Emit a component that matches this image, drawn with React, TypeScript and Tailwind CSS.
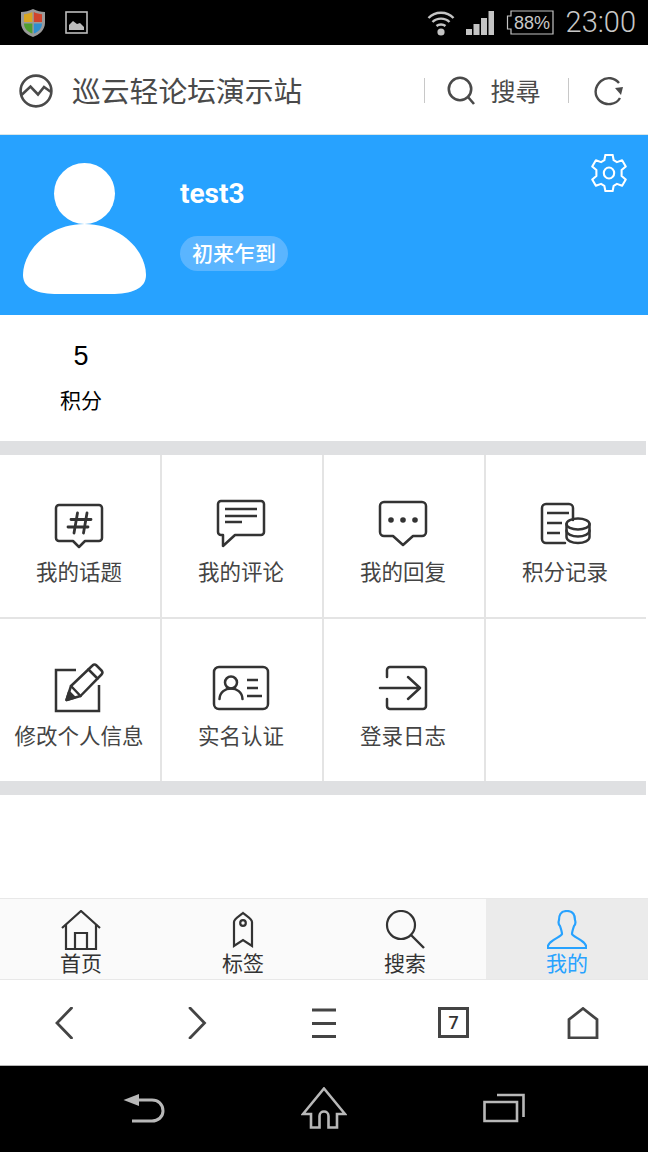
const cjk = "font-['Noto_Sans_CJK_SC','Noto_Sans',sans-serif]";

function StatusBar() {
  return (
    <div className="h-[45px] bg-black flex items-center pl-[20px] pr-[12px] shrink-0">
      <svg width="26" height="30" viewBox="0 0 26 30">
        <path d="M13 1 C17 3 21 4 25 4 V15 C25 22 19 27 13 29 C7 27 1 22 1 15 V4 C5 4 9 3 13 1Z" fill="#9a9a9a" />
        <path d="M12.4 4 C9.5 5.4 6.5 6 4 6.2 V14 H12.4Z" fill="#d9a520" />
        <path d="M13.8 4 C16.5 5.4 19.5 6 22 6.2 V14 H13.8Z" fill="#d0442c" />
        <path d="M4 15.4 H12.4 V25.5 C8 24 4 20.5 4 15.4Z" fill="#4f9e2f" />
        <path d="M22 15.4 H13.8 V25.5 C18 24 22 20.5 22 15.4Z" fill="#2f8fd0" />
      </svg>
      <svg className="ml-[19px]" width="23" height="23" viewBox="0 0 23 23">
        <rect x="1" y="1" width="21" height="21" fill="none" stroke="#bdbdbd" strokeWidth="1.6" />
        <path d="M4 19 V14 L8 10 L12 13 L15 12 L19 16 V19Z" fill="#bdbdbd" />
      </svg>
      <svg className="ml-auto" width="28" height="28" viewBox="0 0 28 28" fill="none" stroke="#c4c4c4" strokeWidth="2.4">
        <path d="M1.5 9 C8 2 20 2 26.5 9" />
        <path d="M5.5 13 C10 8.5 18 8.5 22.5 13" />
        <path d="M9.5 17 C12 15 16 15 18.5 17" />
        <circle cx="14" cy="23" r="3.6" fill="#c4c4c4" stroke="none" />
      </svg>
      <svg className="ml-[11px]" width="28" height="24" viewBox="0 0 28 24" fill="#c4c4c4">
        <rect x="0" y="18" width="6" height="6" />
        <rect x="7.5" y="13" width="6" height="11" />
        <rect x="15" y="7" width="6" height="17" />
        <rect x="22.5" y="0" width="5.5" height="24" />
      </svg>
      <div className="ml-[12px] relative w-[48px] h-[25px] flex items-center justify-center pl-[5px]">
        <svg className="absolute inset-0" width="48" height="25" viewBox="0 0 48 25" fill="none" stroke="#c4c4c4" strokeWidth="1.2">
          <path d="M5 1 H47 V24 H5 V19 H1.5 V6 H5Z" />
        </svg>
        <span className="font-['Liberation_Sans',sans-serif] text-[18px] leading-none text-[#c8c8c8]">88%</span>
      </div>
      <span className="ml-[12px] font-['Roboto',sans-serif] font-light text-[29px] leading-none text-[#c8c8c8]">23:00</span>
    </div>
  );
}

function Header() {
  return (
    <div className={`h-[90px] bg-white border-b border-[#d9e6e8] flex items-center pl-[19px] pt-[2px] shrink-0 ${cjk}`}>
      <svg width="34" height="34" viewBox="0 0 34 34" fill="none" stroke="#4a4a4a" strokeWidth="2.6">
        <circle cx="17" cy="17" r="15.4" />
        <path d="M2.5 21 L11.5 12.5 L19 20.5 L25 13 L32 18" />
      </svg>
      <span className="ml-[19px] text-[28.8px] leading-none text-[#4a4a4a]">巡云轻论坛演示站</span>
      <div className="ml-[122px] w-px h-[25px] bg-[#c8c8c8]" />
      <svg className="ml-[22px]" width="29" height="29" viewBox="0 0 29 29" fill="none" stroke="#4a4a4a" strokeWidth="2.6">
        <circle cx="13" cy="13" r="11.2" />
        <path d="M21 21 L27 28" />
      </svg>
      <span className="ml-[14px] text-[25px] leading-none text-[#4a4a4a]">搜尋</span>
      <div className="ml-[28px] w-px h-[25px] bg-[#c8c8c8]" />
      <svg className="ml-[25px]" width="30" height="30" viewBox="0 0 30 30" fill="none" stroke="#4a4a4a" strokeWidth="2.4">
        <path d="M25 7 C21 2 13 0 7 5 C0 11 0 20 6 25 C12 30 22 29 26 22" />
        <path d="M21 12 L29 11 L27 19Z" fill="#4a4a4a" stroke="none" />
      </svg>
    </div>
  );
}

function Profile() {
  return (
    <div className="h-[180px] bg-[#27a2ff] flex pl-[23px] pr-[20px] shrink-0">
      <svg className="mt-[28px]" width="123" height="132" viewBox="0 0 123 132" fill="#fff">
        <ellipse cx="61.5" cy="30.5" rx="30.5" ry="30.5" />
        <path d="M61.5 61 C98 61 123 88 123 112 C123 126 108 131 88 131 H35 C15 131 0 126 0 112 C0 88 25 61 61.5 61Z" />
      </svg>
      <div className="ml-[34px] flex flex-col items-start">
        <div className="mt-[41px] font-['Roboto',sans-serif] font-bold text-[28px] leading-[36px] text-white">test3</div>
        <div className={`mt-[24px] h-[35px] w-[108px] rounded-full bg-[#5ab5ff] flex items-center justify-center pb-[2px] text-white text-[21px] font-medium leading-none ${cjk}`}>初来乍到</div>
      </div>
      <svg className="ml-auto mt-[19px]" width="38" height="38" viewBox="1.5 1 21 22" fill="none" stroke="#fff" strokeWidth="1.2" strokeLinejoin="round">
        <path d="M9.9 1.5 H14.1 L14.7 4.6 L16.6 5.7 L19.6 4.6 L21.7 8.2 L19.3 10.3 V13.7 L21.7 15.8 L19.6 19.4 L16.6 18.3 L14.7 19.4 L14.1 22.5 H9.9 L9.3 19.4 L7.4 18.3 L4.4 19.4 L2.3 15.8 L4.7 13.7 V10.3 L2.3 8.2 L4.4 4.6 L7.4 5.7 L9.3 4.6Z" />
        <ellipse cx="12" cy="12" rx="3" ry="3.2" />
      </svg>
    </div>
  );
}

function Stat() {
  return (
    <div className={`h-[126px] bg-white shrink-0 w-[162px] flex flex-col items-center ${cjk}`}>
      <div className="mt-[21px] font-['Liberation_Sans',sans-serif] text-[27px] leading-[40px] text-black">5</div>
      <div className="mt-[3px] text-[21px] leading-[40px] text-black">积分</div>
    </div>
  );
}

const stroke = { fill: "none", stroke: "#333", strokeWidth: 2.5, strokeLinejoin: "round" as const, strokeLinecap: "round" as const };

const menuIcons = {
  topic: (
    <g {...stroke}>
      <path d="M9 6 H49 a3 3 0 0 1 3 3 V39 a3 3 0 0 1 -3 3 H35 L29 48 L23 42 H9 a3 3 0 0 1 -3 -3 V9 a3 3 0 0 1 3 -3Z" />
      <path d="M21 20.5 H41 M18 28 H38 M27.5 14 L24 34 M37 14 L33.5 34" strokeWidth="2.8" />
    </g>
  ),
  comment: (
    <g {...stroke}>
      <path d="M9 2 H49 a3 3 0 0 1 3 3 V33 a3 3 0 0 1 -3 3 H23 L11 47 V36 H9 a3 3 0 0 1 -3 -3 V5 a3 3 0 0 1 3 -3Z" />
      <path d="M13 10 H45 M13 17 H45 M13 23 H30" strokeLinecap="butt" />
    </g>
  ),
  reply: (
    <g {...stroke}>
      <path d="M10 3 H48 a4 4 0 0 1 4 4 V33 a4 4 0 0 1 -4 4 H39 L29 46 L19 37 H10 a4 4 0 0 1 -4 -4 V7 a4 4 0 0 1 4 -4Z" />
      <circle cx="17" cy="21" r="2.8" fill="#333" stroke="none" />
      <circle cx="29" cy="21" r="2.8" fill="#333" stroke="none" />
      <circle cx="41" cy="21" r="2.8" fill="#333" stroke="none" />
    </g>
  ),
  record: (
    <g {...stroke}>
      <path d="M37 21 V9 a4 4 0 0 0 -4 -4 H10 a4 4 0 0 0 -4 4 V40 a4 4 0 0 0 4 4 H29" />
      <path d="M11 14 H33 M11 24 H26 M11 34 H24" strokeLinecap="butt" />
      <ellipse cx="42" cy="25" rx="11.5" ry="5.5" />
      <path d="M30.5 25 V38 C30.5 41.5 36 44 42 44 C48 44 53.5 41.5 53.5 38 V25" />
      <path d="M30.5 31.5 C30.5 35 36 37.5 42 37.5 C48 37.5 53.5 35 53.5 31.5" />
    </g>
  ),
  edit: (
    <g {...stroke}>
      <path d="M26 7 H6 V48 H49 V22" strokeLinecap="butt" strokeLinejoin="miter" />
      <path d="M16.5 37 L21 23 L42.5 2.5 Q44.5 0.5 46.5 2.5 L51.5 7.5 Q53.5 9.5 51.5 11.5 L30.5 33Z" />
      <path d="M38.5 6.5 L47.5 15.5 M21 23 L30.5 33" />
      <path d="M16.5 37 L19 29 L24.5 34.5Z" fill="#333" />
    </g>
  ),
  card: (
    <g {...stroke}>
      <rect x="2" y="4" width="54" height="42" rx="5" />
      <circle cx="19" cy="19.5" r="6" />
      <path d="M7.5 36 C8 22 30 22 30.5 36" />
      <path d="M35 17 H46 M35 25 H46 M35 33 H50" strokeLinecap="butt" />
    </g>
  ),
  login: (
    <g {...stroke}>
      <path d="M13 14 V7 a3 3 0 0 1 3 -3 H49 a3 3 0 0 1 3 3 V43 a3 3 0 0 1 -3 3 H16 a3 3 0 0 1 -3 -3 V36" />
      <path d="M6 25 H46 M34 14 L46 25 L34 36" />
    </g>
  ),
};

function Cell({ icon, label, last, bottom }: { icon?: keyof typeof menuIcons; label?: string; last?: boolean; bottom?: boolean }) {
  return (
    <div className={`flex flex-col items-center pt-[44px] border-[#e4e4e4] ${last ? "" : "border-r-2"} ${bottom ? "" : "border-b-2"}`}>
      {icon && (
        <svg width="60" height="50" viewBox="0 0 60 50">
          {menuIcons[icon]}
        </svg>
      )}
      {label && <div className="mt-[8px] mr-[2px] text-[21.5px] leading-[28px] text-[#444] whitespace-nowrap">{label}</div>}
    </div>
  );
}

function Menu() {
  return (
    <div className={`grid w-[646px] grid-cols-[162px_162px_162px_160px] grid-rows-[164px_162px] shrink-0 ${cjk}`}>
      <Cell icon="topic" label="我的话题" />
      <Cell icon="comment" label="我的评论" />
      <Cell icon="reply" label="我的回复" />
      <Cell icon="record" label="积分记录" last />
      <Cell icon="edit" label="修改个人信息" bottom />
      <Cell icon="card" label="实名认证" bottom />
      <Cell icon="login" label="登录日志" bottom />
      <Cell last bottom />
    </div>
  );
}

const tabStroke = { fill: "none", stroke: "#333", strokeWidth: 2.2 };

function TabBar() {
  const tabs = [
    {
      label: "首页",
      icon: (
        <g {...tabStroke}>
          <path d="M1 18 L20 1 L39 18" />
          <path d="M5 14 V39 H35 V14 M14 39 V23 H26 V39" />
        </g>
      ),
    },
    {
      label: "标签",
      icon: (
        <g {...tabStroke}>
          <path d="M11 36 V12 C11 9 15 7 20 3 C25 7 29 9 29 12 V36 L20 30Z" />
          <circle cx="20" cy="13" r="2.8" />
        </g>
      ),
    },
    {
      label: "搜索",
      icon: (
        <g {...tabStroke}>
          <circle cx="16" cy="15" r="14" />
          <path d="M26 25 L39 38" strokeWidth="2.4" />
        </g>
      ),
    },
    {
      label: "我的",
      active: true,
      icon: (
        <g fill="none" stroke="#27a2ff" strokeWidth="2.2">
          <path d="M20 1 C27 1 28 6 28 10 C29 13 28 15 27 16 C26 19 25 22 25 24 C27 28 39 30 39.5 38 H0.5 C1 30 13 28 15 24 C15 22 14 19 13 16 C12 15 11 13 12 10 C12 6 13 1 20 1Z" />
        </g>
      ),
    },
  ];
  return (
    <div className={`h-[81px] grid grid-cols-4 bg-[#fafafa] border-t border-[#e8e8e8] overflow-hidden shrink-0 ${cjk}`}>
      {tabs.map((t) => (
        <div key={t.label} className={`flex flex-col items-center pt-[11px] ${t.active ? "bg-[#ebebeb]" : ""}`}>
          <svg width="40" height="40" viewBox="0 0 40 40">
            {t.icon}
          </svg>
          <div className={`-mt-[2px] text-[21px] leading-[28px] ${t.active ? "text-[#27a2ff]" : "text-[#333]"}`}>{t.label}</div>
        </div>
      ))}
    </div>
  );
}

function BrowserBar() {
  const s = { fill: "none", stroke: "#444", strokeWidth: 2.8 };
  return (
    <div className="h-[87px] bg-white border-t border-[#e8e8e8] border-b-[#b5b5b5] border-b grid grid-cols-5 items-center shrink-0">
      <div className="flex justify-center">
        <svg width="32" height="32" viewBox="0 0 32 32">
          <path d="M22.500 1 L8 16 L22.500 31" {...s} strokeLinecap="round" />
        </svg>
      </div>
      <div className="flex justify-center pl-[5px]">
        <svg width="32" height="32" viewBox="0 0 32 32">
          <path d="M9 1 L23.500 16 L9 31" {...s} strokeLinecap="round" />
        </svg>
      </div>
      <div className="flex justify-center">
        <svg width="26" height="30" viewBox="0 0 26 30">
          <path d="M1 2 H25 M1 15.500 H25 M1 28.500 H25" {...s} />
        </svg>
      </div>
      <div className="flex justify-center">
        <div className="w-[31px] h-[31px] border-[3px] border-[#444] flex items-center justify-center font-['Roboto',sans-serif] font-medium text-[18px] leading-none text-[#333]">7</div>
      </div>
      <div className="flex justify-center">
        <svg width="32" height="32" viewBox="0 0 32 32">
          <path d="M2 31 V12.500 L16 1.500 L30 12.500 V31Z" {...s} />
        </svg>
      </div>
    </div>
  );
}

function NavBar() {
  const s = { fill: "none", stroke: "#b8b8b8", strokeWidth: 2.6 };
  return (
    <div className="flex-1 bg-black flex items-center justify-center gap-[136px] pb-[2px]">
      <svg width="42" height="30" viewBox="0 0 42 30">
        <path d="M0.5 7 L16 1 V13Z" fill="#b8b8b8" />
        <path d="M15 7 H29 C35 7 40 11 40 18 C40 24 35 28 29 28 H9" {...s} strokeWidth="3" />
      </svg>
      <svg width="46" height="42" viewBox="0 0 46 42">
        <path d="M23 1.5 L44 27 H36 V40.500 H27.500 V29 C27.500 23 18.500 23 18.500 29 V40.500 H10 V27 H2Z" {...s} />
      </svg>
      <svg width="42" height="30" viewBox="0 0 42 30">
        <path d="M1.5 9 H34 V28 H1.5Z" {...s} />
        <path d="M14 2 H40.500 V24" {...s} />
      </svg>
    </div>
  );
}

export default function App() {
  return (
    <div className="w-[648px] h-[1152px] flex flex-col overflow-hidden bg-white">
      <StatusBar />
      <Header />
      <Profile />
      <Stat />
      <div className="h-[14px] w-[646px] bg-[#dfe0e2] shrink-0" />
      <Menu />
      <div className="h-[14px] w-[646px] bg-[#dfe0e2] shrink-0" />
      <div className="h-[103px] shrink-0" />
      <TabBar />
      <BrowserBar />
      <NavBar />
    </div>
  );
}
